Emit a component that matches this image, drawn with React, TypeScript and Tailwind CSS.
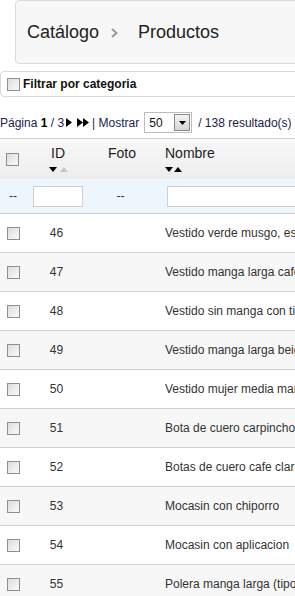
import React from 'react';

const ROWS = [
  { id: 46, name: 'Vestido verde musgo, escote en V' },
  { id: 47, name: 'Vestido manga larga cafe' },
  { id: 48, name: 'Vestido sin manga con tirantes' },
  { id: 49, name: 'Vestido manga larga beige' },
  { id: 50, name: 'Vestido mujer media manga' },
  { id: 51, name: 'Bota de cuero carpincho' },
  { id: 52, name: 'Botas de cuero cafe claro' },
  { id: 53, name: 'Mocasin con chiporro' },
  { id: 54, name: 'Mocasin con aplicacion' },
  { id: 55, name: 'Polera manga larga (tipo)' },
];

function Check() {
  return (
    <span className="block w-[13px] h-[13px] border border-[#8f8f8f] bg-gradient-to-br from-[#dcdcdc] to-[#fbfbfb]" />
  );
}

function Down({ color = '#000' }: { color?: string }) {
  return (
    <svg width="8" height="5" viewBox="0 0 8 5">
      <path d="M0 0H8L4 5Z" fill={color} />
    </svg>
  );
}

function Up({ color = '#000' }: { color?: string }) {
  return (
    <svg width="8" height="5" viewBox="0 0 8 5">
      <path d="M0 5H8L4 0Z" fill={color} />
    </svg>
  );
}

function Play() {
  return (
    <svg width="6" height="9" viewBox="0 0 6 9">
      <path d="M0 0L6 4.5L0 9Z" fill="#000" />
    </svg>
  );
}

export default function App() {
  return (
    <div className="w-[295px] h-[596px] overflow-hidden bg-white font-['Liberation_Sans',Arial,sans-serif]">
      <div className="w-[700px]">
        {/* breadcrumb */}
        <div className="ml-[15px] h-[64px] border border-[#dcdcdc] rounded-[4px] bg-[#f7f7f7] flex items-center pl-[11px] text-[18px] text-[#222]">
          <span>Catálogo</span>
          <svg width="7" height="10" viewBox="0 0 7 10" className="ml-[12px] mr-[20px] mt-[2px]">
            <path d="M1 1L5.5 5L1 9" stroke="#999" strokeWidth="2" fill="none" />
          </svg>
          <span>Productos</span>
        </div>

        {/* filtro */}
        <div className="mt-[7px] h-[26px] border border-[#d8d8d8] rounded-[4px] flex items-center pl-[6px] text-[12px] font-bold text-[#111]">
          <Check />
          <span className="ml-[3px]">Filtrar por categoria</span>
        </div>

        {/* paginacion */}
        <div className="h-[42px] pt-[10px] flex items-center text-[12px] text-[#1c1c4e] border-b border-[#d4d4d4]">
          <span>Página <b className="text-[#000]">1</b> / 3</span>
          <span className="ml-[2px] flex items-center"><Play /></span>
          <span className="ml-[5px] flex items-center"><Play /><Play /></span>
          <span className="ml-[3px]">| Mostrar</span>
          <div className="ml-[5px] w-[48px] h-[21px] border border-[#bdbdbd] bg-white flex items-center">
            <span className="pl-[4px] text-[#111] flex-1">50</span>
            <span className="w-[16px] h-[17px] mr-[1px] border border-[#8a8a8a] bg-gradient-to-b from-[#f4f4f4] to-[#d6d6d6] flex items-center justify-center">
              <svg width="7" height="4" viewBox="0 0 7 4"><path d="M0 0H7L3.5 4Z" fill="#000" /></svg>
            </span>
          </div>
          <span className="ml-[6px]">/ 138 resultado(s)</span>
        </div>

        {/* cabecera */}
        <div className="h-[40px] flex bg-gradient-to-b from-[#f8f8f8] to-[#ededed] text-[14px] text-[#222]">
          <div className="w-[28px] flex items-center justify-center pr-[3px]"><Check /></div>
          <div className="w-[60px] flex flex-col items-center pt-[6px]">
            <span className="leading-[16px]">ID</span>
            <span className="flex gap-[3px] mt-[6px]"><Down /><Up color="#c8c8c8" /></span>
          </div>
          <div className="w-[66px] flex justify-center pt-[6px] pl-[2px]">
            <span className="leading-[16px]">Foto</span>
          </div>
          <div className="flex flex-col items-start pl-[11px] pt-[6px]">
            <span className="leading-[16px]">Nombre</span>
            <span className="flex gap-[1px] mt-[6px]"><Down /><Up /></span>
          </div>
        </div>

        {/* fila de filtros */}
        <div className="h-[35px] flex items-center bg-[#eef6fd] border-b border-[#d0d0d0] text-[12px] text-[#333]">
          <div className="w-[28px] text-center pr-[2px]">--</div>
          <div className="w-[60px] pl-[5px]">
            <div className="w-[50px] h-[21px] bg-white border border-[#cfcfcf]" />
          </div>
          <div className="w-[66px] text-center pr-[1px]">--</div>
          <div className="pl-[13px]">
            <div className="w-[300px] h-[21px] bg-white border border-[#cfcfcf]" />
          </div>
        </div>

        {ROWS.map((r, i) => (
          <div
            key={r.id}
            className={`h-[39px] flex items-center border-b border-[#cfcfcf] text-[12px] text-[#333] ${i % 2 === 1 ? 'bg-[#f7f7f7]' : 'bg-white'}`}
          >
            <div className="w-[28px] flex justify-center pr-[2px]"><Check /></div>
            <div className="w-[60px] text-center pr-[3px]">{r.id}</div>
            <div className="w-[66px]" />
            <div className="pl-[11px] whitespace-nowrap">{r.name}</div>
          </div>
        ))}
      </div>
    </div>
  );
}
